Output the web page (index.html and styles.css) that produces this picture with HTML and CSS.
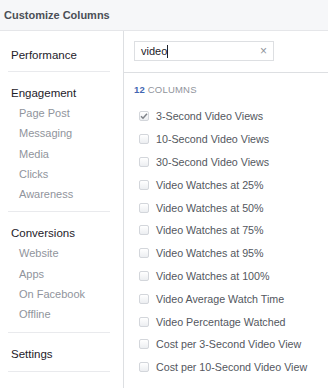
FILE: index.html
```html
<!DOCTYPE html>
<html lang="en">
  <head>
    <meta charset="UTF-8" />
    <title>Customize Columns</title>
    <link rel="stylesheet" href="styles.css">
  </head>
  <body>
    <div class="dialog">
      <div class="header">Customize Columns</div>
      <div class="body">
        <div class="sidebar">
          <div class="section first">
            <div class="heading">Performance</div>
          </div>
          <div class="section">
            <div class="heading">Engagement</div>
            <div class="sub">Page Post</div>
            <div class="sub">Messaging</div>
            <div class="sub">Media</div>
            <div class="sub">Clicks</div>
            <div class="sub">Awareness</div>
          </div>
          <div class="section">
            <div class="heading">Conversions</div>
            <div class="sub">Website</div>
            <div class="sub">Apps</div>
            <div class="sub">On Facebook</div>
            <div class="sub">Offline</div>
          </div>
          <div class="section">
            <div class="heading">Settings</div>
          </div>
        </div>
        <div class="main">
          <div class="search-bar">
            <div class="search">
              <span class="query">video</span><span class="caret"></span>
              <span class="clear">&#215;</span>
            </div>
          </div>
          <div class="count"><b>12</b> COLUMNS</div>
          <ul class="columns">
            <li><span class="box checked"><svg width="8" height="8" viewBox="0 0 8 8"><path d="M1 4.2 L3 6.2 L7 1.8" fill="none" stroke="#7f8389" stroke-width="1.5"/></svg></span>3-Second Video Views</li>
            <li><span class="box"></span>10-Second Video Views</li>
            <li><span class="box"></span>30-Second Video Views</li>
            <li><span class="box"></span>Video Watches at 25%</li>
            <li><span class="box"></span>Video Watches at 50%</li>
            <li><span class="box"></span>Video Watches at 75%</li>
            <li><span class="box"></span>Video Watches at 95%</li>
            <li><span class="box"></span>Video Watches at 100%</li>
            <li><span class="box"></span>Video Average Watch Time</li>
            <li><span class="box"></span>Video Percentage Watched</li>
            <li><span class="box"></span>Cost per 3-Second Video View</li>
            <li><span class="box"></span>Cost per 10-Second Video View</li>
          </ul>
        </div>
      </div>
    </div>
  </body>
</html>
```

FILE: styles.css
```css
* {
  box-sizing: border-box;
  margin: 0;
  padding: 0;
}
body {
  font-family: "Liberation Sans", Arial, sans-serif;
  background: #fff;
  width: 328px;
  height: 388px;
  overflow: hidden;
}
.header {
  height: 31px;
  background: #f6f7f9;
  border-bottom: 1px solid #e5e6e9;
  padding-left: 4px;
  font-size: 11px;
  font-weight: bold;
  line-height: 30px;
  color: #4b4f56;
}
.body {
  display: flex;
  height: 357px;
}
.sidebar {
  width: 124px;
  border-right: 1px solid #dddfe2;
  padding: 0 13px 0 8px;
}
.section {
  padding: 11px 0 7px;
  border-bottom: 1px solid #e9eaed;
}
.section.first {
  padding: 14px 0 6px;
}
.heading {
  padding-left: 3px;
  font-size: 11.5px;
  line-height: 20px;
  color: #1d2129;
}
.sub {
  padding-left: 11px;
  font-size: 11px;
  line-height: 20.3px;
  color: #90949c;
}
.main {
  flex: 1;
}
.search-bar {
  height: 42px;
  padding: 10px 0 0 10px;
  border-bottom: 1px solid #dddfe2;
}
.search {
  width: 140px;
  height: 20px;
  border: 1px solid #dddfe2;
  display: flex;
  align-items: center;
  padding-left: 6px;
  font-size: 11px;
  color: #1d2129;
}
.caret {
  width: 1px;
  height: 13px;
  background: #1d2129;
}
.clear {
  margin-left: auto;
  margin-right: 6px;
  font-size: 12px;
  color: #90949c;
}
.count {
  margin: 10px 0 0 10px;
  font-size: 9.5px;
  line-height: 14px;
  color: #90949c;
  letter-spacing: 0.2px;
}
.count b {
  color: #4267b2;
}
.columns {
  list-style: none;
  margin-top: 8px;
  padding-left: 15px;
}
.columns li {
  display: flex;
  align-items: center;
  height: 22.8px;
  font-size: 10.7px;
  color: #53575e;
}
.box {
  width: 10px;
  height: 10px;
  margin-right: 7px;
  border: 1px solid #d3d6db;
  border-radius: 2px;
  background: linear-gradient(#fff, #eceef1);
  display: flex;
  align-items: center;
  justify-content: center;
}
```
